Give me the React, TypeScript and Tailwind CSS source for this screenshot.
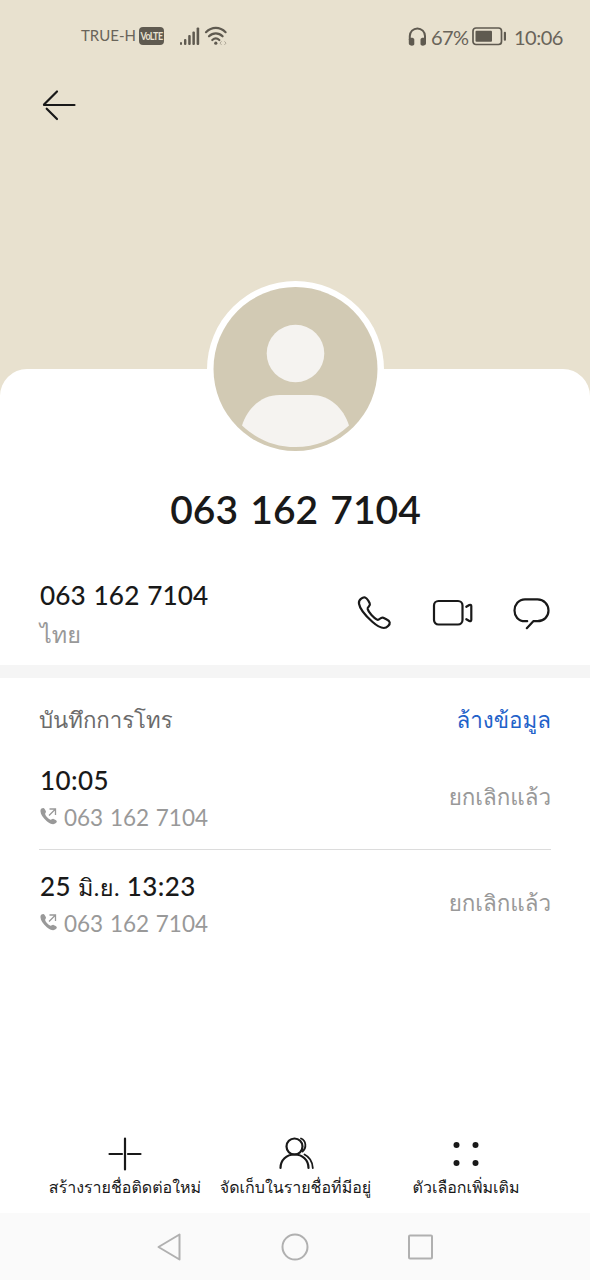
import React from 'react';

const calls = [
    { time: <>10:05</>, number: '063 162 7104', status: 'ยกเลิกแล้ว' },
    {
        time: <>25 <span className="text-[23.5px] font-normal">มิ.ย.</span> 13:23</>,
        number: '063 162 7104',
        status: 'ยกเลิกแล้ว',
    },
];

function StatusBar() {
    return (
        <div className="flex h-[73px] items-center justify-between pl-[81px] pr-[27px] text-[#69645a]">
            <div className="flex items-center">
                <span className="-mt-[3px] w-[55px] whitespace-nowrap text-[15px] leading-5">TRUE-H</span>
                <span className="-mt-[1px] ml-[3px] flex h-[18px] w-[25px] items-center justify-center rounded-[4px] bg-[#5f5a50]">
                    <span className="scale-y-125 text-[9px] font-bold leading-3 tracking-[-0.6px] text-[#e8e1cf]">VoLTE</span>
                </span>
                {/* Signal bars */}
                <svg className="-mt-[2px] ml-[16px]" width="20" height="20" viewBox="0 0 20 20" fill="#5f5a50">
                    <rect x="0" y="16" width="2" height="3" rx="1" />
                    <rect x="4" y="13" width="2.4" height="6" rx="1" />
                    <rect x="8.2" y="9" width="2.5" height="10" rx="1" />
                    <rect x="12.4" y="5.5" width="2.5" height="13.5" rx="1" />
                    <rect x="16.6" y="1.5" width="2.6" height="17.5" rx="1" />
                </svg>
                {/* Wifi */}
                <svg className="-mt-[2px] ml-[4px]" width="24" height="20" viewBox="0 0 24 20" fill="none" stroke="#5f5a50" strokeWidth="2.2" strokeLinecap="round">
                    <path d="M2 6.2C7.8.5 15.8.5 21.6 6.2M5 10.3c4-4 9.6-4 13.6 0M8.3 14c2.2-2 4.8-2 7 0" />
                    <circle cx="11.8" cy="17.2" r="1.6" fill="#5f5a50" stroke="none" />
                    <path d="M17.300 15.600l-1.300 1.500 1.300 1.500M20.700 15.600l1.300 1.500-1.300 1.500" stroke="#b0a999" strokeWidth="1" />
                </svg>
            </div>
            <div className="flex items-center text-[20px] leading-6">
                {/* Headphones */}
                <svg width="19" height="20" viewBox="0 0 19 20" fill="none" stroke="#5f5a50" strokeWidth="2">
                    <path d="M1.8 13V9a7.5 7.5 0 0 1 15.2 0v4" />
                    <path d="M.8 12.5c0-2.5 5.5-2.5 5.5 0v4.5c0 2.5-5.5 2-5.5-.5zM12.500 12.5c0-2.5 5.5-2.5 5.5 0v4c0 2.5-5.5 3-5.5.5z" fill="#5f5a50" stroke="none" />
                </svg>
                <span className="ml-[4px] w-[37px] whitespace-nowrap tracking-[-0.6px]">67%</span>
                {/* Battery */}
                <svg className="-mt-[2px] ml-[4px]" width="35" height="20" viewBox="0 0 35 20">
                    <rect x="1" y="2" width="28.5" height="16.5" rx="3" fill="none" stroke="#5f5a50" strokeWidth="1.7" />
                    <rect x="3.5" y="4.7" width="16.5" height="11" rx="1" fill="#5f5a50" />
                    <rect x="31.800" y="5.8" width="2.2" height="9" rx="1" fill="#5f5a50" />
                </svg>
                <span className="ml-[7px] w-[49px] whitespace-nowrap tracking-[-0.5px]">10:06</span>
            </div>
        </div>
    );
}

function Avatar() {
    return (
        <svg className="-mt-[89px]" width="178" height="178" viewBox="0 0 178 178">
            <circle cx="89.5" cy="89.5" r="88.5" fill="#fff" />
            <circle cx="89.5" cy="89" r="82" fill="#d2cab4" />
            <circle cx="89.5" cy="73.5" r="28.8" fill="#f5f3f0" />
            <path d="M36 145.5C41.5 128 55.5 115 73.5 115h32c18 0 32 13 37.5 30.5C127.500 160 109.500 167 89.500 167s-38-7-53.5-21.5z" fill="#f5f3f0" />
        </svg>
    );
}

function OutgoingIcon() {
    return (
        <svg className="-mt-[4px]" width="18" height="18" viewBox="0 0 18 18">
            <path d="M1.5 1.6C3 .4 4 .8 4.8 2.200l1 1.900c.6 1.200-.9 2-.7 3 .6 2.300 3 4.800 5.400 5.600 1 .3 1.800-1.300 3-.8l2.200 1.100c1.400.8 1.500 1.900.2 3.100-2.200 2-5.500 1-9.100-1.900C2.700 10.800.7 7.500.5 4.600.4 3.200.6 2.300 1.500 1.600z" fill="#999" />
            <path d="M9 8.5L15 2.5M9.5 2h6v6" fill="none" stroke="#999" strokeWidth="1.3" />
        </svg>
    );
}

function ContactRow() {
    return (
        <div className="flex h-[96px] justify-between px-[39px]">
            <div>
                <div className="mt-[7px] whitespace-nowrap pl-px text-[26.2px] font-medium leading-[38px] tracking-[0.1px] [word-spacing:1px]">063 162 7104</div>
                <div className="mt-[2px] pl-px text-[23.4px] leading-[36px] text-[#999]">ไทย</div>
            </div>
            <div className="flex pt-[24px]">
                <svg width="36" height="40" viewBox="0 0 36 40" fill="none" stroke="#191919" strokeWidth="2.2" strokeLinejoin="round">
                    <path d="M4.2 5.7C7.2 3.2 9.2 4.300 11.200 7.500l1.500 2.800c1.400 2.800-2.600 3.400-2 5.800 1 3.500 6 8.700 9.300 10.500 2.600 1.300 3.200-3.100 6.300-1.900l3 1.500c4.200 2 4.300 4.200 1.800 6.900-3.300 3.500-9.300 1.500-15.800-4.300C8.700 22.800 2.800 15.500 2 10.700c-.4-2.300.5-3.700 2.200-5z" />
                </svg>
                <svg className="ml-[39px]" width="42" height="40" viewBox="0 0 42 40" fill="none" stroke="#191919" strokeWidth="2.2" strokeLinecap="round" strokeLinejoin="round">
                    <rect x="2" y="8" width="28.5" height="23.5" rx="4.5" />
                    <path d="M34.300 13.800l3-1.800q2-.7 2 1.200v13.600q0 1.900-2 1.200l-3-1.800" />
                </svg>
                <svg className="ml-[38px]" width="39" height="40" viewBox="0 0 39 40" fill="none" stroke="#191919" strokeWidth="2.2" strokeLinecap="round" strokeLinejoin="round">
                    <path d="M15.2 28.2H13C6 28.2 2.500 23 2.500 17.500S6.500 6.300 13 6.300h12.500c6.500 0 11 5.200 11 11.200s-4.500 10.700-11 10.700h-4.200l-6.500 7" />
                </svg>
            </div>
        </div>
    );
}

interface BottomActionProps {
    label: string;
    className: string;
    children: React.ReactNode;
}

function BottomAction({ label, className, children }: BottomActionProps) {
    return (
        <div className={`flex flex-col items-center ${className}`}>
            <svg className="mt-px" width="40" height="40" viewBox="0 0 40 40" fill="none" stroke="#191919" strokeWidth="2.2" strokeLinecap="round">
                {children}
            </svg>
            <span className="whitespace-nowrap text-[16px] leading-[26px]">{label}</span>
        </div>
    );
}

export default function App() {
    return (
        <div className="flex h-[1280px] w-[590px] flex-col overflow-hidden bg-[#e8e1cf] font-['Lato','Loma','Noto_Sans_Thai_Looped',sans-serif] text-[#191919]">
            {/* Header */}
            <header className="h-[369px] shrink-0">
                <StatusBar />
                <svg className="ml-[40px] mt-[14px]" width="38" height="36" viewBox="0 0 38 36" fill="none" stroke="#191919" strokeWidth="2.2" strokeLinecap="round">
                    <path d="M17 4.500L4 17.500M4 18H34.500M6.700 21.700L17 32" />
                </svg>
            </header>

            <main className="flex flex-1 flex-col rounded-t-[27px] bg-white">
                <div className="flex h-[200px] flex-col items-center">
                    <Avatar />
                    <h1 className="mt-[25px] whitespace-nowrap pl-px text-[39px] font-semibold leading-[52px] [word-spacing:2.5px]">063 162 7104</h1>
                </div>

                <ContactRow />
                <div className="h-[13px] shrink-0 bg-[#f5f5f5]" />

                {/* Call log */}
                <section className="flex-1 px-[39px]">
                    <div className="flex h-[75px] items-center justify-between pt-[9px]">
                        <span className="text-[22.2px] text-[#6b6b6b]">บันทึกการโทร</span>
                        <span className="text-[22.4px] text-[#1f62c9]">ล้างข้อมูล</span>
                    </div>
                    {calls.map((call, i) => (
                        <div key={i} className={`flex justify-between ${i === 0 ? 'h-[97px] border-b border-[#dcdcdc]' : 'h-[106px] pt-[9px]'}`}>
                            <div className="pt-[9px]">
                                <div className="h-[37px] whitespace-nowrap pl-px text-[26px] font-medium leading-[36px] tracking-[0.4px]">{call.time}</div>
                                <div className="flex items-center gap-[6px] pl-px text-[22.5px] leading-[37px] text-[#999]">
                                    <OutgoingIcon />
                                    <span className="whitespace-nowrap [word-spacing:1px]">{call.number}</span>
                                </div>
                            </div>
                            <span className="pt-[26px] text-[22.4px] leading-[36px] text-[#999]">{call.status}</span>
                        </div>
                    ))}
                </section>

                {/* Actions */}
                <div className="flex h-[80px] pl-[40px]">
                    <BottomAction label="สร้างรายชื่อติดต่อใหม่" className="w-[170px]">
                        <path d="M20 4.500v31M4.500 20H17M23 20h12.500" />
                    </BottomAction>
                    <BottomAction label="จัดเก็บในรายชื่อที่มีอยู่" className="w-[171px]">
                        <circle cx="18.5" cy="12.5" r="8" />
                        <path d="M4.500 34C4.500 26 10.500 20.500 18.500 20.500s14 5.500 14 13.500" />
                        <path d="M25 4.500c5 2 6 9 1.500 13M28.500 20.500c5 2.500 8 7.500 8.300 13.500" strokeWidth="1.8" />
                    </BottomAction>
                    <BottomAction label="ตัวเลือกเพิ่มเติม" className="w-[170px]">
                        <g fill="#191919" stroke="none">
                            <circle cx="10.5" cy="11" r="3" />
                            <circle cx="29.5" cy="11" r="3" />
                            <circle cx="10.5" cy="29" r="3" />
                            <circle cx="29.5" cy="29" r="3" />
                        </g>
                    </BottomAction>
                </div>

                {/* System navigation */}
                <nav className="flex h-[67px] shrink-0 items-center justify-between bg-[#fafafa] px-[155px]">
                    <svg width="30" height="30" viewBox="0 0 30 30" fill="none" stroke="#b0b0b0" strokeWidth="2" strokeLinejoin="round">
                        <path d="M24.500 2.500v25L3.500 15z" />
                    </svg>
                    <svg width="30" height="30" viewBox="0 0 30 30" fill="none" stroke="#b0b0b0" strokeWidth="2">
                        <circle cx="15" cy="15" r="12.5" />
                    </svg>
                    <svg width="30" height="30" viewBox="0 0 30 30" fill="none" stroke="#b0b0b0" strokeWidth="2">
                        <rect x="4" y="3.5" width="23" height="23" rx="1" />
                    </svg>
                </nav>
            </main>
        </div>
    );
}
